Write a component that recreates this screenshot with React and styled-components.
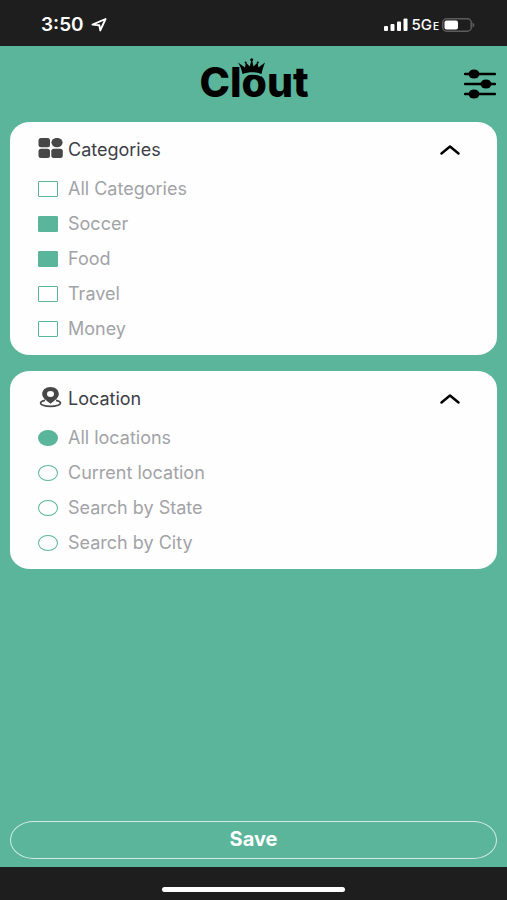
import React, { useState } from 'react';
import styled, { createGlobalStyle } from 'styled-components';

const GREEN = '#5ab59a';

const categories = ['All Categories', 'Soccer', 'Food', 'Travel', 'Money'];
const locations = ['All locations', 'Current location', 'Search by State', 'Search by City'];

const StatusIcons = () => (
   <Status>
      <svg width="24" height="13" viewBox="0 0 24 13" fill="#fff" aria-hidden="true">
         <rect x="0" y="8" width="4" height="5" rx="1" />
         <rect x="6.5" y="6" width="4" height="7" rx="1" />
         <rect x="13" y="3.5" width="4" height="9.5" rx="1" />
         <rect x="19.5" y="0.5" width="4" height="12.5" rx="1" />
      </svg>
      <Network>5G<small>E</small></Network>
      <svg width="33" height="14" viewBox="0 0 33 14" aria-hidden="true">
         <rect x="0.75" y="0.75" width="28.5" height="12.5" rx="4" fill="none" stroke="#5c5c5c" strokeWidth="1.5" />
         <path d="M30.5 4.5C33 5.5 33 8.5 30.5 9.5Z" fill="#5c5c5c" />
         <rect x="2.5" y="2.5" width="13.5" height="9" rx="2" fill="#fff" />
      </svg>
   </Status>
);

const Logo = () => (
   <svg width="116" height="52" viewBox="0 0 116 52" role="img" aria-label="Clout">
      <text x="58" y="39" textAnchor="middle" fontFamily="Inter, sans-serif" fontWeight="800" fontSize="41">Clout</text>
      <path d="M46.5 17.3C52 14.8 60 14.8 65.5 17.3" fill="none" stroke={GREEN} strokeWidth="2.6" />
      <path d="M46.5 16C45.5 11.5 44.5 8 42 4.5L49 9.5L49.8 4.5L53.8 8.5L55.7 1L57.6 8.5L61.6 4.5L62.4 9.5L69 4.5C67.5 8 66.5 11.5 65.5 16C59.5 13.5 52.5 13.5 46.5 16Z" />
      <circle cx="55.7" cy="1.7" r="1.5" />
      <circle cx="49.6" cy="4.5" r="1" />
      <circle cx="61.8" cy="4.5" r="1" />
   </svg>
);

const FilterIcon = () => (
   <svg width="32" height="30" viewBox="0 0 32 30" aria-hidden="true">
      <path d="M1 5H31M1 15H31M1 25H31" stroke="#000" strokeWidth="2.4" strokeLinecap="round" />
      <ellipse cx="10" cy="5" rx="5.5" ry="4.6" />
      <ellipse cx="22" cy="15" rx="5.5" ry="4.6" />
      <ellipse cx="10" cy="25" rx="5.5" ry="4.6" />
   </svg>
);

const CategoryIcon = () => (
   <svg width="25" height="24" viewBox="0 0 25 24" fill="#474747" aria-hidden="true">
      <rect x="0.5" y="0" width="11.5" height="9.2" rx="2.5" />
      <ellipse cx="19" cy="4.6" rx="5.6" ry="4.7" />
      <rect x="0.5" y="10.8" width="11.5" height="9.2" rx="2.5" />
      <rect x="13.3" y="10.8" width="11.5" height="9.2" rx="2.5" />
   </svg>
);

const LocationIcon = () => (
   <svg width="25" height="24" viewBox="0 0 25 24" aria-hidden="true">
      <path fill="#474747" fillRule="evenodd" d="M12.5 0C7.5 0 4.2 3 4.2 7C4.2 11 8.5 13.6 12.5 16.8C16.5 13.6 20.8 11 20.8 7C20.8 3 17.5 0 12.5 0ZM12.5 4A3.5 3 0 1 1 12.5 10A3.5 3 0 1 1 12.5 4Z" />
      <path fill="none" stroke="#474747" strokeWidth="1.6" d="M7 13.4C1.5 14.5 1.5 17 5 18.2C9 19.8 16 19.8 20 18.2C23.5 17 23.5 14.5 18 13.4" />
   </svg>
);

const Panel = ({ title, icon, children }) => {
   const [open, setOpen] = useState(true);

   return (
      <Card>
         <CardTitle>
            <Toggle type="button" aria-expanded={open} onClick={() => setOpen(!open)}>
               {icon}
               <span>{title}</span>
               <Chevron $open={open} width="20" height="10" viewBox="0 0 20 10" aria-hidden="true">
                  <path d="M1.5 8.5L10 1.5L18.5 8.5" />
               </Chevron>
            </Toggle>
         </CardTitle>
         {open && <Options role="group" aria-label={title}>{children}</Options>}
      </Card>
   );
}

const App = () => {
   const [picked, setPicked] = useState(['Soccer', 'Food']);
   const [place, setPlace] = useState('All locations');

   const toggle = (name) => setPicked(
      picked.includes(name) ? picked.filter((item) => item !== name) : [...picked, name]
   );

   return (
      <Screen>
         <GlobalStyle />
         <StatusBar>
            <Time>
               3:50
               <svg width="16" height="14" viewBox="0 0 16 14" aria-hidden="true">
                  <path d="M1.5 6.6L14.5 1L9.3 12.4L8.3 7.2Z" fill="none" stroke="#fff" strokeWidth="1.9" strokeLinejoin="round" />
               </svg>
            </Time>
            <StatusIcons />
         </StatusBar>
         <Header>
            <Logo />
            <FilterButton type="button" aria-label="Filters"><FilterIcon /></FilterButton>
         </Header>
         <Main>
            <Panel title="Categories" icon={<CategoryIcon />}>
               {categories.map((name) => (
                  <Option key={name}>
                     <Check type="checkbox" checked={picked.includes(name)} onChange={() => toggle(name)} />
                     {name}
                  </Option>
               ))}
            </Panel>
            <Panel title="Location" icon={<LocationIcon />}>
               {locations.map((name) => (
                  <Option key={name}>
                     <Check type="radio" name="location" checked={place === name} onChange={() => setPlace(name)} />
                     {name}
                  </Option>
               ))}
            </Panel>
            <Save type="button">Save</Save>
         </Main>
         <HomeBar><Indicator /></HomeBar>
      </Screen>
   );
}

const GlobalStyle = createGlobalStyle`
   * { box-sizing:border-box; }
   body {
      margin:0;
      background:${GREEN};
      font-family:Inter, 'Liberation Sans', sans-serif;
   }
   button {
      font-family:inherit;
      cursor:pointer;
   }
   svg { flex:none; }
`
const Screen = styled.div`
   display:flex;
   flex-direction:column;
   min-height:100vh;
   background:${GREEN};
`
const StatusBar = styled.div`
   display:flex;
   align-items:center;
   justify-content:space-between;
   height:46px;
   padding:3px 32px 0 41px;
   background:#1f1e1f;
   color:#fff;
`
const Time = styled.div`
   display:flex;
   align-items:center;
   gap:7px;
   font-size:19px;
   font-weight:600;
`
const Status = styled.div`
   display:flex;
   align-items:center;
   gap:3px;
`
const Network = styled.span`
   font-size:15px;
   font-weight:500;
   small {
      margin-left:1px;
      font-size:10px;
      font-weight:600;
   }
`
const Header = styled.header`
   display:grid;
   grid-template-columns:1fr auto 1fr;
   align-items:center;
   height:76px;
   padding:0 11px;
   svg:first-child { grid-column:2; }
`
const FilterButton = styled.button`
   display:flex;
   justify-self:end;
   padding:0;
   border:0;
   background:none;
   color:#000;
`
const Main = styled.main`
   flex:1;
   display:flex;
   flex-direction:column;
   gap:16px;
   padding:0 10px 8px;
`
const Card = styled.section`
   padding:10px 37px 9px 28px;
   border-radius:20px / 18px;
   background:#fefefe;
`
const CardTitle = styled.h2`
   margin:0 0 4px;
`
const Toggle = styled.button`
   display:flex;
   align-items:center;
   gap:5px;
   width:100%;
   height:35px;
   padding:0;
   border:0;
   background:none;
   color:#3d3f47;
   font-size:18px;
   text-align:left;
   span { flex:1; }
`
const Chevron = styled.svg`
   fill:none;
   stroke:#000;
   stroke-width:2.4;
   stroke-linecap:round;
   stroke-linejoin:round;
   transform:${({ $open }) => ($open ? 'none' : 'rotate(180deg)')};
`
const Options = styled.div`
   display:flex;
   flex-direction:column;
`
const Option = styled.label`
   display:flex;
   align-items:center;
   gap:10px;
   height:35px;
   color:#a2a3a7;
   font-size:18px;
   cursor:pointer;
`
const Check = styled.input`
   appearance:none;
   flex:none;
   width:20px;
   height:16px;
   margin:0;
   border:1px solid ${GREEN};
   border-radius:${({ type }) => (type === 'radio' ? '50%' : '1px')};
   &:checked { background:${GREEN}; }
`
const Save = styled.button`
   height:38px;
   margin-top:auto;
   padding:0 0 2px;
   border:1px solid #d5ece4;
   border-radius:24px / 19px;
   background:none;
   color:#fff;
   font-size:20px;
   font-weight:700;
`
const HomeBar = styled.div`
   display:flex;
   align-items:center;
   justify-content:center;
   height:33px;
   padding-top:12px;
   background:#1f1e1f;
`
const Indicator = styled.div`
   width:36%;
   height:5px;
   border-radius:3px;
   background:#fff;
`

export default App;
